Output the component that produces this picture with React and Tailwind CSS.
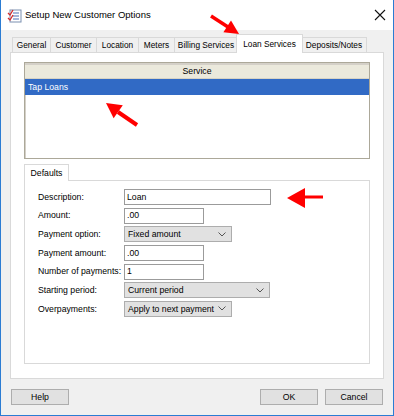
import React from 'react';

const tabs = [
  { label: 'General', w: 'w-[39px]' },
  { label: 'Customer', w: 'w-[47px]' },
  { label: 'Location', w: 'w-[43px]' },
  { label: 'Meters', w: 'w-[37px]' },
  { label: 'Billing Services', w: 'w-[64px]' },
  { label: 'Loan Services', w: 'w-[67px]', active: true },
  { label: 'Deposits/Notes', w: 'w-[66px]' },
];

const Chevron = () => (
  <svg width="8" height="5" viewBox="0 0 8 5" className="shrink-0">
    <path d="M0.5 0.5 L4 4 L7.5 0.5" fill="none" stroke="#555" strokeWidth="1" />
  </svg>
);

const TextBox = ({ value, w }) => (
  <div className={`${w} h-4 border border-[#9b9b9b] bg-white px-[2px] flex items-center leading-none`}>
    {value}
  </div>
);

const Select = ({ value, w }) => (
  <div className={`${w} h-4 border border-[#adadad] bg-[#e1e1e1] pl-[3px] pr-[5px] flex items-center justify-between leading-none`}>
    <span>{value}</span>
    <Chevron />
  </div>
);

const rows = [
  { label: 'Description:', el: <TextBox value="Loan" w="w-[147px]" /> },
  { label: 'Amount:', el: <TextBox value=".00" w="w-[80px]" /> },
  { label: 'Payment option:', el: <Select value="Fixed amount" w="w-[108px]" /> },
  { label: 'Payment amount:', el: <TextBox value=".00" w="w-[80px]" /> },
  { label: 'Number of payments:', el: <TextBox value="1" w="w-[80px]" /> },
  { label: 'Starting period:', el: <Select value="Current period" w="w-[146px]" /> },
  { label: 'Overpayments:', el: <Select value="Apply to next payment" w="w-[108px]" /> },
];

const Button = ({ children }) => (
  <div className="w-[58px] h-4 border border-[#adadad] bg-[#e1e1e1] flex items-center justify-center leading-none">
    {children}
  </div>
);

export default function App() {
  return (
    <div className="relative w-[394px] h-[416px] flex flex-col border border-[#2b7cd3] border-t-0 bg-[#f0f0f0] text-[8.7px] text-black font-['Liberation_Sans',Arial,sans-serif] overflow-hidden">
      {/* title bar */}
      <div className="h-[30px] bg-white flex items-center pl-[6px] pr-[7px] shrink-0">
        <svg width="15" height="15" viewBox="0 0 15 15">
          <rect x="3" y="2" width="11" height="12" fill="#fff" stroke="#7a8fb0" strokeWidth="1" />
          <path d="M6 5 H12 M6 8 H12 M6 11 H12" stroke="#4a6fb5" strokeWidth="1" />
          <path d="M1 5 L3 7 L6 2 M1 10 L3 12 L6 7" fill="none" stroke="#d42a2a" strokeWidth="1.3" />
        </svg>
        <span className="ml-[3px] text-[9.5px]">Setup New Customer Options</span>
        <svg width="12" height="12" viewBox="0 0 12 12" className="ml-auto">
          <path d="M1 1 L11 11 M11 1 L1 11" stroke="#111" strokeWidth="1.1" />
        </svg>
      </div>

      <div className="flex-1 flex flex-col px-[9px] pt-[4px]">
        {/* tabs */}
        <div className="flex items-end h-[18px] pl-[2px] text-[8.3px]">
          {tabs.map((t) =>
            t.active ? (
              <div
                key={t.label}
                className={`${t.w} h-[19px] -mb-px -ml-[2px] -mr-[1px] relative z-10 bg-white border border-b-0 border-[#d9d9d9] flex items-center justify-center leading-none`}
              >
                {t.label}
              </div>
            ) : (
              <div
                key={t.label}
                className={`${t.w} h-[15px] bg-[#f0f0f0] border border-b-0 border-[#d9d9d9] -ml-px first:ml-0 flex items-center justify-center leading-none`}
              >
                {t.label}
              </div>
            )
          )}
        </div>

        {/* tab panel */}
        <div className="w-[374px] h-[327px] bg-white border border-[#d9d9d9] pl-[13px] pt-[9px]">
          {/* service list */}
          <div className="w-[346px] h-[97px] border border-[#aca899] shadow-[inset_1px_1px_0_#d4d0c8] bg-white flex flex-col">
            <div className="h-[16px] bg-[#ebe9dc] border-b border-[#d6d3c5] border-t-2 border-t-[#d4d0c8] flex items-center justify-center leading-none">
              Service
            </div>
            <div className="h-[16px] bg-[#316ac5] text-white flex items-center pl-[3px] leading-none">Tap Loans</div>
          </div>

          {/* defaults group */}
          <div className="mt-[5px] w-[346px]">
            <div className="w-[45px] h-[17px] -mb-px relative z-10 bg-white border border-b-0 border-[#d9d9d9] flex items-center justify-center leading-none">
              Defaults
            </div>
            <div className="h-[184px] border border-[#d9d9d9] pl-[13px] pt-[8px]">
              <div className="flex flex-col gap-[2.67px]">
                {rows.map((r) => (
                  <div key={r.label} className="flex items-center h-4">
                    <span className="w-[86px] shrink-0 leading-none">{r.label}</span>
                    {r.el}
                  </div>
                ))}
              </div>
            </div>
          </div>
        </div>

        {/* buttons */}
        <div className="mt-[10px] flex items-center pl-[1px] pr-[1px]">
          <Button>Help</Button>
          <div className="ml-auto flex gap-[7px]">
            <Button>OK</Button>
            <Button>Cancel</Button>
          </div>
        </div>
      </div>

      {/* red annotations */}
      <svg className="absolute inset-0 pointer-events-none" width="394" height="416" viewBox="0 0 394 416">
        <g fill="#f00" stroke="#f00">
          <line x1="210" y1="16" x2="227" y2="27" strokeWidth="3.5" />
          <polygon points="238,34 222.4,32.3 230,20.5" stroke="none" />
          <path d="M243 48 Q270 50 298 47" fill="none" strokeWidth="2" />
          <line x1="136" y1="125" x2="117" y2="112" strokeWidth="4" />
          <polygon points="105,103 121.8,105.2 112.6,118.2" stroke="none" />
          <line x1="302" y1="197" x2="322" y2="197" strokeWidth="3" />
          <polygon points="286,198 304,188 304,208" stroke="none" />
        </g>
      </svg>
    </div>
  );
}
